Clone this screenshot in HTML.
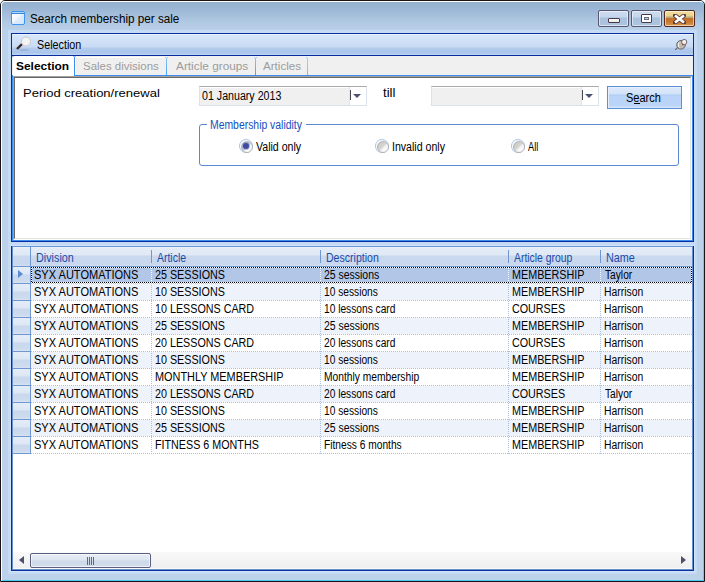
<!DOCTYPE html>
<html><head><meta charset="utf-8">
<style>
*{margin:0;padding:0;box-sizing:border-box}
html,body{width:705px;height:582px;overflow:hidden;background:#fff}
body{position:relative;font-family:"Liberation Sans",sans-serif;color:#000}
.a{position:absolute}
.t{position:absolute;white-space:pre;transform-origin:0 0}
#win{left:0;top:0;width:705px;height:582px;border:1px solid #1a1216;border-radius:5px 5px 0 0;
 background:linear-gradient(#93afcf 0px,#9db8d6 9px,#afc8e2 20px,#b9d0e9 29px,#bcd1ea 40px,#bcd1ea 100%)}
#win:before{content:"";position:absolute;left:0;top:0;right:0;bottom:0;border:1px solid #fff;border-right-color:#5ccff2;border-bottom-color:#45caf0;border-radius:4px 4px 0 0}
.cb{position:absolute;top:10px;height:17px;border:1px solid #585670;border-radius:2px;
 background:linear-gradient(#cddbef 0,#c5d6ec 6px,#a9c1dd 7px,#adc4e0 100%);box-shadow:inset 0 0 0 1px rgba(255,255,255,.55)}
#close{background:linear-gradient(#f2dda2 0,#ead18b 5px,#b8ab83 6px,#b8ab83 7px,#c46f27 7px,#c87a30 11px,#d99a4d 100%);border-color:#50281e}
.combo{position:absolute;height:20px;border:1px solid #dae2ec;border-top-color:#a9aca6;background:#fff}
.combo .f{position:absolute;left:0;top:0;bottom:0;background:#f0f0f0}
.radio{position:absolute;width:14px;height:14px;border-radius:50%;border:1px solid #a9c3e6;background:#fff}
.radio:after{content:"";position:absolute;left:1px;top:1px;width:10px;height:10px;border-radius:50%;border:1px solid #b4b4b4;background:linear-gradient(135deg,#c2c2be 0,#d6d6d3 45%,#f6f6f6 60%,#fff 100%)}
.radio.on:before{content:"";position:absolute;left:3px;top:3px;width:6px;height:6px;border-radius:50%;background:#3e4aa4;box-shadow:0 0 0 1px rgba(80,90,170,.35);z-index:1}
.rh{position:absolute;left:13px;width:17px;height:16px;background:linear-gradient(#e4ecf7 0,#dde7f4 7px,#c9d8ed 8px,#cddbee 14px,#d8e3f2 16px)}
.hl{position:absolute;left:13px;width:17px;height:1px;background:#6f98d3}
.row{position:absolute;left:31px;width:661px;height:16px}
.dh{position:absolute;left:31px;width:661px;height:1px;background-image:linear-gradient(90deg,#a7c0e4 50%,transparent 50%);background-size:2px 1px}
.dv{position:absolute;width:1px;top:267px;height:187px;background-image:linear-gradient(#a7c0e4 50%,transparent 50%);background-size:1px 2px}
.hsep{position:absolute;top:250px;width:1px;height:13px;background:#6f98d3}
</style></head><body>
<div id="win" class="a"></div>
<!-- title icon -->
<div class="a" style="left:11px;top:11px;width:14px;height:14px;border:1px solid #3d95f2;border-radius:2px;background:linear-gradient(#a9dcff 0,#a9dcff 1px,#3a84da 1px,#3a84da 2px,transparent 2px),linear-gradient(135deg,#fff 0,#f4f8fd 40%,#dce9fa 60%,#d6e6fa 100%)"></div>
<div class="cb" style="left:598px;width:31px"><div class="a" style="left:9px;top:7px;width:12px;height:5px;border:1px solid #4a3a48;background:linear-gradient(#fff,#e8e8e8);border-radius:1px"></div></div>
<div class="cb" style="left:631px;width:31px"><div class="a" style="left:9px;top:3px;width:11px;height:9px;border:1px solid #4a3a48;background:#fff;border-radius:1px"><div class="a" style="left:2px;top:2px;width:5px;height:3px;border:1px solid #6a6a7a;background:#b8cce6"></div></div></div>
<div class="cb" id="close" style="left:664px;width:31px"><svg class="a" style="left:8px;top:3px" width="13" height="10" viewBox="0 0 13 10"><path d="M2 1.5 L11 8.5 M11 1.5 L2 8.5" stroke="#5a4040" stroke-width="4.4" stroke-linecap="round"/><path d="M2 1.5 L11 8.5 M11 1.5 L2 8.5" stroke="#fff" stroke-width="2.6"/></svg></div>

<div class="a" style="left:8px;top:30px;width:689px;height:544px;background:#c5daf4"></div>

<!-- group panel -->
<div class="a" style="left:11px;top:33px;width:683px;height:209px;background:#0a2f9c"></div>
<div class="a" style="left:12px;top:34px;width:681px;height:21px;background:linear-gradient(#e8f1fc 0,#e8f1fc 1px,#d6e6fa 1px,#c9dbf4 13px,#b3ccee 14px,#a9c4eb 19px,#b9d1f2 20px,#b9d1f2 21px)"></div>
<div class="a" style="left:12px;top:56px;width:681px;height:184px;background:#f0f0f0"></div>
<svg class="a" style="left:15px;top:36px" width="18" height="16" viewBox="0 0 18 16">
 <ellipse cx="9" cy="14" rx="5" ry="1" fill="#8aa4c8" opacity=".5"/>
 <line x1="2" y1="13" x2="7" y2="8" stroke="#3a2a2a" stroke-width="2.4"/>
 <circle cx="11" cy="5.5" r="4.5" fill="#f4f4f4" stroke="#c8c8c8" stroke-width="1"/>
</svg>
<svg class="a" style="left:673px;top:38px" width="16" height="14" viewBox="0 0 16 14">
 <line x1="2.3" y1="11.8" x2="5.5" y2="8.6" stroke="#6e5e5e" stroke-width="1.1"/>
 <circle cx="8" cy="6.8" r="4.3" fill="#bdbdb6" stroke="#6a6060" stroke-width="1"/>
 <path d="M7 3.6 A3.6 3.6 0 0 0 7.6 10.4 A4.5 4.5 0 0 1 7 3.6 Z" fill="#fff"/>
 <circle cx="11.2" cy="4" r="2.6" fill="#f2f2f0" stroke="#6a5a5a" stroke-width="0.9"/>
 <circle cx="9.8" cy="6.6" r="0.9" fill="#b04a30"/>
</svg>
<!-- tab content -->
<div class="a" style="left:12px;top:75px;width:681px;height:166px;background:#3d8cef"></div>
<div class="a" style="left:13px;top:76px;width:679px;height:164px;background:#fff;border-top:1px solid #a0a0a0;border-left:1px solid #a0a0a0;border-bottom:1px solid #fffcf6;border-right:1px solid #fffcf6"></div>
<div class="a" style="left:14px;top:77px;width:677px;height:162px;border-top:1px solid #696969;border-left:1px solid #696969;border-bottom:1px solid #e3e3e3;border-right:1px solid #e3e3e3"></div>
<!-- tabs -->
<div class="a" style="left:13px;top:56px;width:61px;height:20px;background:#fff"></div>
<div class="a" style="left:74px;top:56px;width:1px;height:20px;background:#3d8cef"></div>
<div class="a" style="left:12px;top:56px;width:2px;height:1px;background:#9cc4f4"></div>
<div class="a" style="left:73px;top:56px;width:3px;height:1px;background:#9cc4f4"></div>
<div class="a" style="left:75px;top:57px;width:91px;height:18px;border-left:1px solid #fffdf8;border-top:1px solid #fffdf8"></div>
<div class="a" style="left:166px;top:58px;width:1px;height:17px;background:linear-gradient(#8cc2f6,#4c9ff2)"></div><div class="a" style="left:165px;top:57px;width:1px;height:1px;background:#9ccaf6"></div><div class="a" style="left:167px;top:57px;width:1px;height:1px;background:#9ccaf6"></div>
<div class="a" style="left:255px;top:58px;width:1px;height:17px;background:linear-gradient(#8cc2f6,#4c9ff2)"></div><div class="a" style="left:254px;top:57px;width:1px;height:1px;background:#9ccaf6"></div><div class="a" style="left:256px;top:57px;width:1px;height:1px;background:#9ccaf6"></div>
<div class="a" style="left:307px;top:58px;width:1px;height:17px;background:linear-gradient(#a6d2f8,#7ab8f4)"></div><div class="a" style="left:306px;top:57px;width:1px;height:1px;background:#9ccaf6"></div>

<!-- combos -->
<div class="combo" style="left:199px;top:86px;width:168px"><div class="f" style="width:149px;border-top:1px solid #fff"></div><div class="a" style="left:149px;top:0;width:1px;height:18px;background:#dde5ee"></div><div class="a" style="left:150px;top:3px;width:1px;height:10px;background:#4b4b55"></div><div class="a" style="left:153px;top:7px;width:0;height:0;border-left:4px solid transparent;border-right:4px solid transparent;border-top:4px solid #4d5273"></div></div>
<div class="combo" style="left:431px;top:86px;width:168px"><div class="f" style="width:149px;border-top:1px solid #fff"></div><div class="a" style="left:149px;top:0;width:1px;height:18px;background:#dde5ee"></div><div class="a" style="left:150px;top:3px;width:1px;height:10px;background:#4b4b55"></div><div class="a" style="left:153px;top:7px;width:0;height:0;border-left:4px solid transparent;border-right:4px solid transparent;border-top:4px solid #4d5273"></div></div>
<!-- search button -->
<div class="a" style="left:607px;top:86px;width:75px;height:23px;border:1px solid #5b8fd6;background:linear-gradient(#dde9fb 0,#d3e3f9 7px,#abcaf1 8px,#b9d4f8 9px,#bad5f8 19px,#d3e4fb 20px,#d3e4fb 21px);box-shadow:inset 1px 1px 0 #e6f0fc"></div>
<div class="a" style="left:634px;top:103px;width:6px;height:1px;background:#000"></div>
<!-- group box -->
<div class="a" style="left:199px;top:124px;width:480px;height:42px;border:1px solid #5a89d2;border-radius:3px"></div>
<div class="a" style="left:207px;top:120px;width:99px;height:8px;background:#fff"></div>
<div class="radio on" style="left:239px;top:139px"></div>
<div class="radio" style="left:375px;top:139px"></div>
<div class="radio" style="left:511px;top:139px"></div>

<!-- grid -->
<div class="a" style="left:10px;top:245px;width:685px;height:327px;background:#d0e3fa"></div>
<div class="a" style="left:11px;top:246px;width:683px;height:325px;background:#0a2f9c"></div>
<div class="a" style="left:12px;top:246px;width:681px;height:1px;background:#6896d2"></div>
<div class="a" style="left:12px;top:247px;width:681px;height:323px;background:#6690d0"></div>
<div class="a" style="left:13px;top:247px;width:679px;height:322px;background:#fff"></div>
<div class="a" style="left:13px;top:247px;width:679px;height:19px;background:linear-gradient(#f0f4fa 0,#e4ecf7 1px,#dfe8f5 8px,#cad9ee 9px,#c8d7ed 17px,#d2dff0 19px)"></div>
<div class="a" style="left:13px;top:266px;width:679px;height:1px;background:#6f98d3"></div>
<div class="hsep" style="left:151px"></div><div class="hsep" style="left:320px"></div><div class="hsep" style="left:508px"></div><div class="hsep" style="left:600px"></div>
<div class="a" style="left:30px;top:247px;width:1px;height:207px;background:#6f98d3"></div>
<div class="rh" style="top:267px"></div><div class="hl" style="top:283px"></div>
<div class="row" style="top:267px;background:#b2c6e8"></div>
<div class="dh" style="top:283px"></div>
<div class="rh" style="top:284px"></div><div class="hl" style="top:300px"></div>
<div class="row" style="top:284px;background:#eef3fb"></div>
<div class="dh" style="top:300px"></div>
<div class="rh" style="top:301px"></div><div class="hl" style="top:317px"></div>
<div class="row" style="top:301px;background:#ffffff"></div>
<div class="dh" style="top:317px"></div>
<div class="rh" style="top:318px"></div><div class="hl" style="top:334px"></div>
<div class="row" style="top:318px;background:#eef3fb"></div>
<div class="dh" style="top:334px"></div>
<div class="rh" style="top:335px"></div><div class="hl" style="top:351px"></div>
<div class="row" style="top:335px;background:#ffffff"></div>
<div class="dh" style="top:351px"></div>
<div class="rh" style="top:352px"></div><div class="hl" style="top:368px"></div>
<div class="row" style="top:352px;background:#eef3fb"></div>
<div class="dh" style="top:368px"></div>
<div class="rh" style="top:369px"></div><div class="hl" style="top:385px"></div>
<div class="row" style="top:369px;background:#ffffff"></div>
<div class="dh" style="top:385px"></div>
<div class="rh" style="top:386px"></div><div class="hl" style="top:402px"></div>
<div class="row" style="top:386px;background:#eef3fb"></div>
<div class="dh" style="top:402px"></div>
<div class="rh" style="top:403px"></div><div class="hl" style="top:419px"></div>
<div class="row" style="top:403px;background:#ffffff"></div>
<div class="dh" style="top:419px"></div>
<div class="rh" style="top:420px"></div><div class="hl" style="top:436px"></div>
<div class="row" style="top:420px;background:#eef3fb"></div>
<div class="dh" style="top:436px"></div>
<div class="rh" style="top:437px"></div><div class="hl" style="top:453px"></div>
<div class="row" style="top:437px;background:#ffffff"></div>
<div class="dh" style="top:453px"></div>
<div class="dv" style="left:151px"></div>
<div class="dv" style="left:320px"></div>
<div class="dv" style="left:508px"></div>
<div class="dv" style="left:600px"></div>
<div class="a" style="left:151px;top:268px;width:1px;height:14px;background-image:linear-gradient(#fff 50%,transparent 50%);background-size:1px 2px"></div>
<div class="a" style="left:320px;top:268px;width:1px;height:14px;background-image:linear-gradient(#fff 50%,transparent 50%);background-size:1px 2px"></div>
<div class="a" style="left:508px;top:268px;width:1px;height:14px;background-image:linear-gradient(#fff 50%,transparent 50%);background-size:1px 2px"></div>
<div class="a" style="left:600px;top:268px;width:1px;height:14px;background-image:linear-gradient(#fff 50%,transparent 50%);background-size:1px 2px"></div>
<div class="a" style="left:31px;top:267px;width:661px;height:1px;background-image:linear-gradient(90deg,#000 50%,#fff 50%);background-size:2px 1px"></div>
<div class="a" style="left:31px;top:282px;width:661px;height:1px;background-image:linear-gradient(90deg,#fff 50%,#000 50%);background-size:2px 1px"></div>
<div class="a" style="left:31px;top:267px;width:1px;height:16px;background-image:linear-gradient(#000 50%,#fff 50%);background-size:1px 2px"></div>
<div class="a" style="left:691px;top:267px;width:1px;height:16px;background-image:linear-gradient(#000 50%,#fff 50%);background-size:1px 2px"></div>
<div class="a" style="left:18px;top:270px;width:0;height:0;border-top:4.5px solid transparent;border-bottom:4.5px solid transparent;border-left:5.5px solid #5a8ad4"></div>
<!-- scrollbar -->
<div class="a" style="left:13px;top:552px;width:679px;height:16px;background:linear-gradient(#f9f9f9 0,#efefef 100%)"></div><div class="a" style="left:13px;top:568px;width:679px;height:1px;background:#fbf8f4"></div>
<div class="a" style="left:19px;top:556px;width:0;height:0;border-top:4.5px solid transparent;border-bottom:4.5px solid transparent;border-right:5px solid #4c4f6e"></div>
<div class="a" style="left:681px;top:556px;width:0;height:0;border-top:4.5px solid transparent;border-bottom:4.5px solid transparent;border-left:5px solid #4c4f6e"></div>
<div class="a" style="left:30px;top:553px;width:121px;height:15px;border:1px solid #5c6080;border-radius:2px;background:linear-gradient(#e7edf5 0,#dde6f1 6px,#ccd9ea 7px,#d3deed 100%);box-shadow:inset 0 0 0 1px rgba(255,255,255,.6)"></div>
<div class="a" style="left:87px;top:557px;width:7px;height:8px;background-image:linear-gradient(90deg,#6a6476 1px,transparent 1px);background-size:2px 8px"></div>
<div class="t" style="left:29.53px;top:13px;font-size:12px;line-height:12px;color:#000;transform:scaleX(0.9737);">Search membership per sale</div>
<div class="t" style="left:37.10px;top:39px;font-size:12px;line-height:12px;color:#000;transform:scaleX(0.8958);">Selection</div>
<div class="t" style="left:16.40px;top:61px;font-size:11px;line-height:11px;font-weight:bold;color:#000;transform:scaleX(1.0840);">Selection</div>
<div class="t" style="left:82.96px;top:61px;font-size:11px;line-height:11px;color:#9c9c9c;transform:scaleX(1.0423);">Sales divisions</div>
<div class="t" style="left:176.00px;top:61px;font-size:11px;line-height:11px;color:#9c9c9c;transform:scaleX(1.0746);">Article groups</div>
<div class="t" style="left:263.00px;top:61px;font-size:11px;line-height:11px;color:#9c9c9c;transform:scaleX(1.0556);">Articles</div>
<div class="t" style="left:22.82px;top:88px;font-size:11px;line-height:11px;color:#000;transform:scaleX(1.1842);">Period creation/renewal</div>
<div class="t" style="left:202.00px;top:90px;font-size:12px;line-height:12px;color:#000;transform:scaleX(0.8876);">01 January 2013</div>
<div class="t" style="left:383.00px;top:87px;font-size:12px;line-height:12px;color:#000;transform:scaleX(1.0909);">till</div>
<div class="t" style="left:626.08px;top:92px;font-size:12px;line-height:12px;color:#000;transform:scaleX(0.9167);">Search</div>
<div class="t" style="left:210.13px;top:119px;font-size:12px;line-height:12px;color:#1650bd;transform:scaleX(0.8667);">Membership validity</div>
<div class="t" style="left:256.00px;top:141px;font-size:12px;line-height:12px;color:#000;transform:scaleX(0.8824);">Valid only</div>
<div class="t" style="left:392.12px;top:141px;font-size:12px;line-height:12px;color:#000;transform:scaleX(0.8814);">Invalid only</div>
<div class="t" style="left:528.00px;top:141px;font-size:12px;line-height:12px;color:#000;transform:scaleX(0.7692);">All</div>
<div class="t" style="left:36.10px;top:252px;font-size:12px;line-height:12px;color:#1a4aa8;transform:scaleX(0.9000);">Division</div>
<div class="t" style="left:157.00px;top:252px;font-size:12px;line-height:12px;color:#1a4aa8;transform:scaleX(0.8700);">Article</div>
<div class="t" style="left:326.12px;top:252px;font-size:12px;line-height:12px;color:#1a4aa8;transform:scaleX(0.8793);">Description</div>
<div class="t" style="left:514.00px;top:252px;font-size:12px;line-height:12px;color:#1a4aa8;transform:scaleX(0.8657);">Article group</div>
<div class="t" style="left:606.10px;top:252px;font-size:12px;line-height:12px;color:#1a4aa8;transform:scaleX(0.9000);">Name</div>
<div class="t" style="left:34.38px;top:269px;font-size:12px;line-height:12px;color:#000;transform:scaleX(0.9196);">SYX AUTOMATIONS</div>
<div class="t" style="left:155.40px;top:269px;font-size:12px;line-height:12px;color:#000;transform:scaleX(0.8961);">25 SESSIONS</div>
<div class="t" style="left:324.43px;top:269px;font-size:12px;line-height:12px;color:#000;transform:scaleX(0.8710);">25 sessions</div>
<div class="t" style="left:512.40px;top:269px;font-size:12px;line-height:12px;color:#000;transform:scaleX(0.8987);">MEMBERSHIP</div>
<div class="t" style="left:605.30px;top:269px;font-size:12px;line-height:12px;color:#000;transform:scaleX(0.8500);">Taylor</div>
<div class="t" style="left:34.38px;top:286px;font-size:12px;line-height:12px;color:#000;transform:scaleX(0.9196);">SYX AUTOMATIONS</div>
<div class="t" style="left:155.41px;top:286px;font-size:12px;line-height:12px;color:#000;transform:scaleX(0.8950);">10 SESSIONS</div>
<div class="t" style="left:324.45px;top:286px;font-size:12px;line-height:12px;color:#000;transform:scaleX(0.8500);">10 sessions</div>
<div class="t" style="left:512.40px;top:286px;font-size:12px;line-height:12px;color:#000;transform:scaleX(0.8987);">MEMBERSHIP</div>
<div class="t" style="left:604.44px;top:286px;font-size:12px;line-height:12px;color:#000;transform:scaleX(0.8636);">Harrison</div>
<div class="t" style="left:34.38px;top:303px;font-size:12px;line-height:12px;color:#000;transform:scaleX(0.9196);">SYX AUTOMATIONS</div>
<div class="t" style="left:155.41px;top:303px;font-size:12px;line-height:12px;color:#000;transform:scaleX(0.8950);">10 LESSONS CARD</div>
<div class="t" style="left:324.45px;top:303px;font-size:12px;line-height:12px;color:#000;transform:scaleX(0.8500);">10 lessons card</div>
<div class="t" style="left:512.40px;top:303px;font-size:12px;line-height:12px;color:#000;transform:scaleX(0.8950);">COURSES</div>
<div class="t" style="left:604.44px;top:303px;font-size:12px;line-height:12px;color:#000;transform:scaleX(0.8636);">Harrison</div>
<div class="t" style="left:34.38px;top:320px;font-size:12px;line-height:12px;color:#000;transform:scaleX(0.9196);">SYX AUTOMATIONS</div>
<div class="t" style="left:155.40px;top:320px;font-size:12px;line-height:12px;color:#000;transform:scaleX(0.8961);">25 SESSIONS</div>
<div class="t" style="left:324.43px;top:320px;font-size:12px;line-height:12px;color:#000;transform:scaleX(0.8710);">25 sessions</div>
<div class="t" style="left:512.40px;top:320px;font-size:12px;line-height:12px;color:#000;transform:scaleX(0.8987);">MEMBERSHIP</div>
<div class="t" style="left:604.44px;top:320px;font-size:12px;line-height:12px;color:#000;transform:scaleX(0.8636);">Harrison</div>
<div class="t" style="left:34.38px;top:337px;font-size:12px;line-height:12px;color:#000;transform:scaleX(0.9196);">SYX AUTOMATIONS</div>
<div class="t" style="left:155.41px;top:337px;font-size:12px;line-height:12px;color:#000;transform:scaleX(0.8950);">20 LESSONS CARD</div>
<div class="t" style="left:324.45px;top:337px;font-size:12px;line-height:12px;color:#000;transform:scaleX(0.8500);">20 lessons card</div>
<div class="t" style="left:512.40px;top:337px;font-size:12px;line-height:12px;color:#000;transform:scaleX(0.8950);">COURSES</div>
<div class="t" style="left:604.44px;top:337px;font-size:12px;line-height:12px;color:#000;transform:scaleX(0.8636);">Harrison</div>
<div class="t" style="left:34.38px;top:354px;font-size:12px;line-height:12px;color:#000;transform:scaleX(0.9196);">SYX AUTOMATIONS</div>
<div class="t" style="left:155.41px;top:354px;font-size:12px;line-height:12px;color:#000;transform:scaleX(0.8950);">10 SESSIONS</div>
<div class="t" style="left:324.45px;top:354px;font-size:12px;line-height:12px;color:#000;transform:scaleX(0.8500);">10 sessions</div>
<div class="t" style="left:512.40px;top:354px;font-size:12px;line-height:12px;color:#000;transform:scaleX(0.8987);">MEMBERSHIP</div>
<div class="t" style="left:604.44px;top:354px;font-size:12px;line-height:12px;color:#000;transform:scaleX(0.8636);">Harrison</div>
<div class="t" style="left:34.38px;top:371px;font-size:12px;line-height:12px;color:#000;transform:scaleX(0.9196);">SYX AUTOMATIONS</div>
<div class="t" style="left:155.39px;top:371px;font-size:12px;line-height:12px;color:#000;transform:scaleX(0.9071);">MONTHLY MEMBERSHIP</div>
<div class="t" style="left:324.45px;top:371px;font-size:12px;line-height:12px;color:#000;transform:scaleX(0.8545);">Monthly membership</div>
<div class="t" style="left:512.40px;top:371px;font-size:12px;line-height:12px;color:#000;transform:scaleX(0.8987);">MEMBERSHIP</div>
<div class="t" style="left:604.44px;top:371px;font-size:12px;line-height:12px;color:#000;transform:scaleX(0.8636);">Harrison</div>
<div class="t" style="left:34.38px;top:388px;font-size:12px;line-height:12px;color:#000;transform:scaleX(0.9196);">SYX AUTOMATIONS</div>
<div class="t" style="left:155.41px;top:388px;font-size:12px;line-height:12px;color:#000;transform:scaleX(0.8950);">20 LESSONS CARD</div>
<div class="t" style="left:324.45px;top:388px;font-size:12px;line-height:12px;color:#000;transform:scaleX(0.8500);">20 lessons card</div>
<div class="t" style="left:512.40px;top:388px;font-size:12px;line-height:12px;color:#000;transform:scaleX(0.8950);">COURSES</div>
<div class="t" style="left:605.30px;top:388px;font-size:12px;line-height:12px;color:#000;transform:scaleX(0.8500);">Talyor</div>
<div class="t" style="left:34.38px;top:405px;font-size:12px;line-height:12px;color:#000;transform:scaleX(0.9196);">SYX AUTOMATIONS</div>
<div class="t" style="left:155.41px;top:405px;font-size:12px;line-height:12px;color:#000;transform:scaleX(0.8950);">10 SESSIONS</div>
<div class="t" style="left:324.45px;top:405px;font-size:12px;line-height:12px;color:#000;transform:scaleX(0.8500);">10 sessions</div>
<div class="t" style="left:512.40px;top:405px;font-size:12px;line-height:12px;color:#000;transform:scaleX(0.8987);">MEMBERSHIP</div>
<div class="t" style="left:604.44px;top:405px;font-size:12px;line-height:12px;color:#000;transform:scaleX(0.8636);">Harrison</div>
<div class="t" style="left:34.38px;top:422px;font-size:12px;line-height:12px;color:#000;transform:scaleX(0.9196);">SYX AUTOMATIONS</div>
<div class="t" style="left:155.40px;top:422px;font-size:12px;line-height:12px;color:#000;transform:scaleX(0.8961);">25 SESSIONS</div>
<div class="t" style="left:324.43px;top:422px;font-size:12px;line-height:12px;color:#000;transform:scaleX(0.8710);">25 sessions</div>
<div class="t" style="left:512.40px;top:422px;font-size:12px;line-height:12px;color:#000;transform:scaleX(0.8987);">MEMBERSHIP</div>
<div class="t" style="left:604.44px;top:422px;font-size:12px;line-height:12px;color:#000;transform:scaleX(0.8636);">Harrison</div>
<div class="t" style="left:34.38px;top:439px;font-size:12px;line-height:12px;color:#000;transform:scaleX(0.9196);">SYX AUTOMATIONS</div>
<div class="t" style="left:155.41px;top:439px;font-size:12px;line-height:12px;color:#000;transform:scaleX(0.8950);">FITNESS 6 MONTHS</div>
<div class="t" style="left:324.45px;top:439px;font-size:12px;line-height:12px;color:#000;transform:scaleX(0.8500);">Fitness 6 months</div>
<div class="t" style="left:512.40px;top:439px;font-size:12px;line-height:12px;color:#000;transform:scaleX(0.8987);">MEMBERSHIP</div>
<div class="t" style="left:604.44px;top:439px;font-size:12px;line-height:12px;color:#000;transform:scaleX(0.8636);">Harrison</div>
</body></html>
